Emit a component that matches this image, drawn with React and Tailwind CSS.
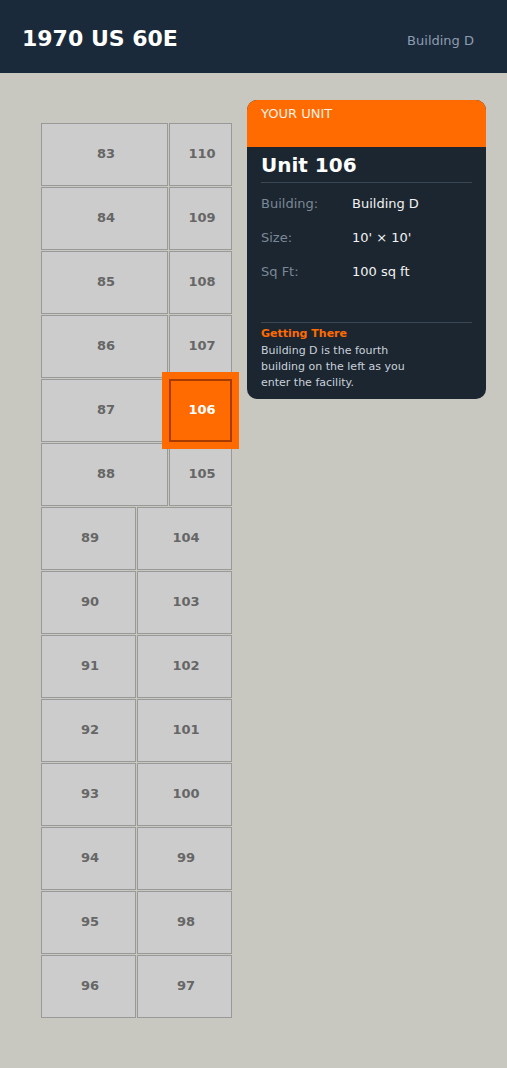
import React from "react";

const topRows = [
  [83, 110],
  [84, 109],
  [85, 108],
  [86, 107],
  [87, 106],
  [88, 105],
];
const bottomRows = [
  [89, 104],
  [90, 103],
  [91, 102],
  [92, 101],
  [93, 100],
  [94, 99],
  [95, 98],
  [96, 97],
];

function Cell({ n, active }) {
  if (active) {
    return (
      <div className="relative z-10 h-[63px] flex items-center justify-center pl-[3px] pb-[1px] bg-[#ff6b00] border-2 border-[#a83c00] shadow-[0_0_0_7px_#ff6b00] text-white font-bold text-[13px]">
        {n}
      </div>
    );
  }
  return (
    <div className="h-[63px] flex items-center justify-center pl-[3px] pb-[1px] bg-[#cccccc] border border-[#999999] text-[#666666] font-bold text-[13px]">
      {n}
    </div>
  );
}

export default function App() {
  return (
    <div
      className="min-h-[1068px] bg-[#c8c8c0]"
      style={{ fontFamily: '"DejaVu Sans", sans-serif' }}
    >
      <header className="h-[73px] bg-[#1b2a3b] flex items-start justify-between pl-[22px] pr-[33px]">
        <div className="mt-[26px] text-[22px] leading-[26px] font-bold text-white">
          1970 US 60E
        </div>
        <div className="mt-[33px] text-[13px] leading-[16px] text-[#8d9caf]">
          Building D
        </div>
      </header>

      <div className="flex items-start">
        <div className="ml-[41px] mt-[50px] w-[191px] flex flex-col gap-px">
          {topRows.map(([a, b]) => (
            <div key={a} className="grid grid-cols-[127px_63px] gap-px">
              <Cell n={a} />
              <Cell n={b} active={b === 106} />
            </div>
          ))}
          {bottomRows.map(([a, b]) => (
            <div key={a} className="grid grid-cols-[95px_95px] gap-px">
              <Cell n={a} />
              <Cell n={b} />
            </div>
          ))}
        </div>

        <div className="ml-[15px] mt-[27px] w-[239px] rounded-[10px] overflow-hidden bg-[#1c2631]">
          <div className="h-[47px] bg-[#ff6b00] px-[14px] pt-[6px] text-[13px] leading-[16px] text-[#fff1e6]">
            YOUR UNIT
          </div>
          <div className="px-[14px] pb-[8px]">
            <div className="pt-[6px] pb-[5px] border-b border-[#3a4856] text-[20px] leading-[24px] font-bold text-white">
              Unit 106
            </div>
            <div className="pt-[4px] text-[13px]">
              <div className="flex h-[34px] leading-[34px]">
                <div className="w-[91px] text-[#7b8896]">Building:</div>
                <div className="text-[#f2f2f2]">Building D</div>
              </div>
              <div className="flex h-[34px] leading-[34px]">
                <div className="w-[91px] text-[#7b8896]">Size:</div>
                <div className="text-[#f2f2f2]">10' × 10'</div>
              </div>
              <div className="flex h-[34px] leading-[34px]">
                <div className="w-[91px] text-[#7b8896]">Sq Ft:</div>
                <div className="text-[#f2f2f2]">100 sq ft</div>
              </div>
            </div>
            <div className="mt-[33px] border-t border-[#3a4856] pt-[4px]">
              <div className="text-[11px] leading-[14px] font-bold text-[#ff6b00]">
                Getting There
              </div>
              <div className="mt-[2px] max-w-[160px] text-[11px] leading-[16px] text-[#c9d1da]">
                Building D is the fourth building on the left as you enter the facility.
              </div>
            </div>
          </div>
        </div>
      </div>
    </div>
  );
}
